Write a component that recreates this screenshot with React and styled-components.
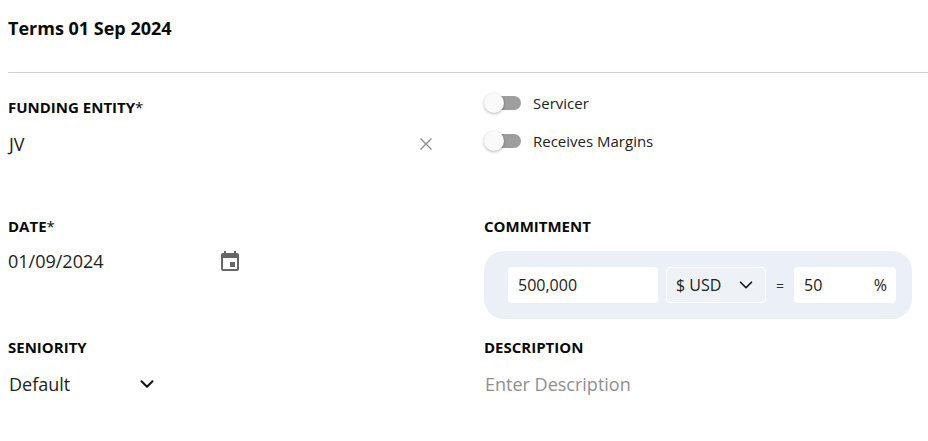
import React from "react";
import styled, { createGlobalStyle } from "styled-components";

const Global = createGlobalStyle`
  html, body { margin: 0; padding: 0; background: #fff; }
  body { font-family: "Open Sans", "Noto Sans", sans-serif; color: #111; overflow: hidden; }
`;

const Page = styled.div`
  width: 928px;
  height: 441px;
  padding-left: 8px;
  box-sizing: border-box;
`;

const Title = styled.h1`
  margin: 0;
  height: 73px;
  box-sizing: border-box;
  padding-top: 16px;
  font-size: 18px;
  line-height: 24px;
  font-weight: 700;
  color: #0a0a0a;
  border-bottom: 1px solid #cdd2e2;
`;

const Grid = styled.div`
  display: grid;
  grid-template-columns: 476px 428px;
  grid-template-rows: 119px 127px auto;
`;

const Field = styled.div`
  display: flex;
  flex-direction: column;
  padding-top: ${p => p.$top ?? 24}px;
`;

const Label = styled.label`
  font-size: 15px;
  line-height: 20px;
  font-weight: 700;
  color: #0a0a0a;
  span { font-weight: 400; }
`;

const ValueRow = styled.div`
  display: flex;
  align-items: center;
  justify-content: space-between;
  width: ${p => p.$width}px;
  height: 24px;
  margin-top: ${p => p.$mt ?? 6}px;
  font-size: 18px;
  line-height: 24px;
  color: ${p => p.$muted ? "#8f8f8f" : "#222"};
  padding-left: ${p => p.$indent || 0}px;
  box-sizing: border-box;
`;

const IconSlot = styled.span`
  display: flex;
  align-items: center;
  justify-content: center;
  width: 24px;
  height: 24px;
  padding-top: ${p => p.$drop || 0}px;
  color: ${p => p.$color};
  svg { display: block; }
`;

const Toggles = styled.div`
  display: flex;
  flex-direction: column;
  gap: 14px;
  padding-top: 18px;
`;

const ToggleRow = styled.div`
  display: flex;
  align-items: center;
  height: 24px;
  gap: 12px;
  font-size: 15px;
  color: #222;
`;

const Toggle = styled.span`
  position: relative;
  display: block;
  width: 37px;
  height: 14px;
  &::before {
    content: "";
    position: absolute;
    left: 6px; right: 0; top: 0; bottom: 0;
    background: #9e9e9e;
    border-radius: 7px;
  }
  &::after {
    content: "";
    position: absolute;
    left: 0; top: -3px;
    width: 20px; height: 20px;
    border-radius: 50%;
    background: #fafafa;
    box-shadow: 0 1px 3px rgba(0,0,0,.3);
  }
`;

const Panel = styled.div`
  display: flex;
  align-items: center;
  flex-shrink: 0;
  width: 428px;
  height: 68px;
  margin-top: 15px;
  box-sizing: border-box;
  padding: 0 16px 0 24px;
  background: #ebf0f8;
  border-radius: 20px;
`;

const Box = styled.div`
  display: flex;
  align-items: center;
  justify-content: space-between;
  box-sizing: border-box;
  width: ${p => p.$width}px;
  height: 36px;
  padding: 0 ${p => p.$pr || 10}px 0 10px;
  background: #fff;
  border-radius: 4px;
  font-size: 16px;
  color: #222;
`;

const SelectBox = styled(Box)`
  margin-left: 8px;
  background: #eef1f6;
  border: 1px solid #fff;
  padding: 0 11px 0 9px;
`;

const Equals = styled.span`
  width: 28px;
  text-align: center;
  font-size: 14px;
  color: #333;
`;

const Chevron = ({ size = 16, sw = 2 }) => (
  <svg width={size} height={size} viewBox="0 0 16 16" fill="none" stroke="#111" strokeWidth={sw} strokeLinecap="round" strokeLinejoin="round">
    <path d="M2.5 5.2 8 10.7l5.5-5.5" />
  </svg>
);

export default function App() {
  return (
    <Page>
      <Global />
      <Title>Terms 01 Sep 2024</Title>
      <Grid>
        <Field>
          <Label>FUNDING ENTITY<span>*</span></Label>
          <ValueRow $width={430} $indent={1} $mt={15}>
            JV
            <IconSlot $color="#8a8a8a">
              <svg width="12" height="12" viewBox="0 0 12 12" stroke="currentColor" strokeWidth="1.3">
                <path d="M.5.5l11 11M11.5.5l-11 11" />
              </svg>
            </IconSlot>
          </ValueRow>
        </Field>
        <Toggles>
          <ToggleRow><Toggle />Servicer</ToggleRow>
          <ToggleRow><Toggle />Receives Margins</ToggleRow>
        </Toggles>
        <Field>
          <Label>DATE<span>*</span></Label>
          <ValueRow $width={234} $mt={13}>
            01/09/2024
            <IconSlot $color="#666" $drop={2}>
              <svg width="24" height="24" viewBox="0 0 24 24" fill="currentColor">
                <path d="M17 12h-5v5h5v-5zM16 1v2H8V1H6v2H5c-1.11 0-1.99.9-1.99 2L3 19c0 1.1.89 2 2 2h14c1.1 0 2-.9 2-2V5c0-1.1-.9-2-2-2h-1V1h-2zm3 18H5V8h14v11z" />
              </svg>
            </IconSlot>
          </ValueRow>
        </Field>
        <Field>
          <Label>COMMITMENT</Label>
          <Panel>
            <Box $width={150}>500,000</Box>
            <SelectBox $width={100}>$ USD <Chevron size={16} sw={1.6} /></SelectBox>
            <Equals>=</Equals>
            <Box $width={102} $pr={9}>50<span>%</span></Box>
          </Panel>
        </Field>
        <Field $top={18}>
          <Label>SENIORITY</Label>
          <ValueRow $width={147} $indent={1} $mt={15}>
            Default
            <Chevron size={16} sw={2} />
          </ValueRow>
        </Field>
        <Field $top={18}>
          <Label>DESCRIPTION</Label>
          <ValueRow $width={300} $indent={1} $mt={15} $muted>Enter Description</ValueRow>
        </Field>
      </Grid>
    </Page>
  );
}
